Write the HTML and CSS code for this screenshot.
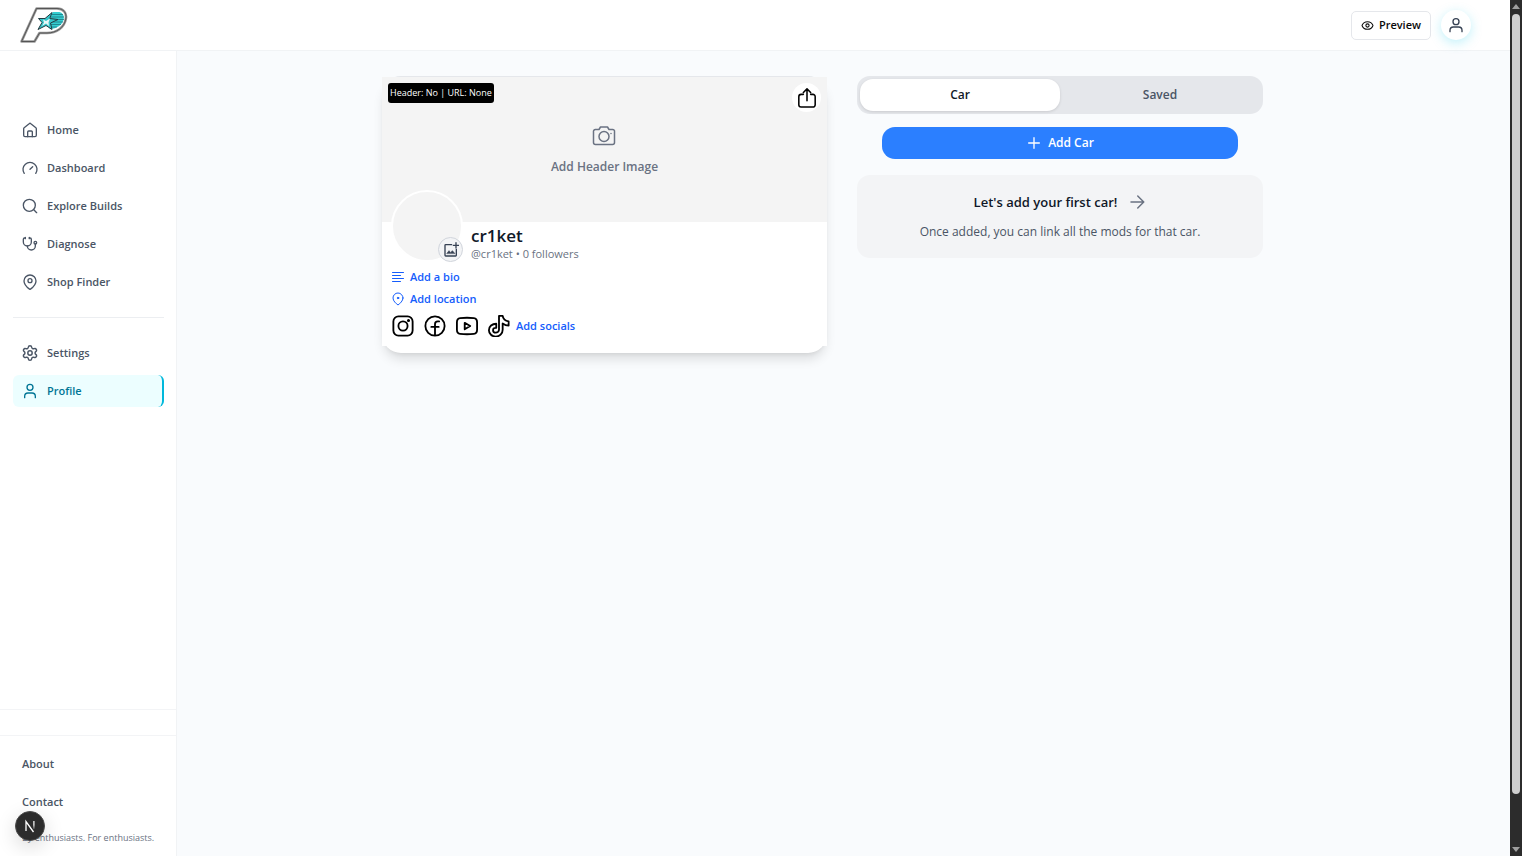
FILE: index.html
```html
<!DOCTYPE html>
<html lang="en">
<head>
    <meta charset="UTF-8">
    <meta name="viewport" content="width=device-width, initial-scale=1.0">
    <title>Profile</title>
    <link rel="stylesheet" href="styles.css">
</head>
<body>
    <div class="page">
        <header class="topbar">
            <a class="logo" href="#" aria-label="Home page">
                <svg width="48" height="36" viewBox="0 0 48 36">
                    <path d="M16.500 1.500H37C43.500 1.500 47 6 45.800 12 44.300 20.500 36.500 26 27 26H19.500L14.500 34.500H1.500Z" fill="#fff" stroke="#9a9a9a" stroke-width="2.600" stroke-linejoin="round"/>
                    <path d="M16.500 1.500H37C43.500 1.500 47 6 45.800 12 44.300 20.500 36.500 26 27 26H19.500L14.500 34.500H1.500Z" fill="none" stroke="#444" stroke-width=".8" stroke-linejoin="round"/>
                    <path d="M33 5H39.500C43 6 44.500 9 43.500 13 42 18 37 21.500 30 22.300L28 16 30 8Z" fill="#35cdd0"/>
                    <path d="M32 7.500h11M31 10h13M30 12.500h14M31 15h12M30 17.500h11M30 20h7" stroke="#176c75" stroke-width=".7"/>
                    <path d="M32 5.500 29.800 11.500 38 12.500 30.500 16 32 22.500 26 18.500 18 22.500 22 15.500 18.500 11.500H25Z" fill="#35c5ca" stroke="#263b42" stroke-width="1" stroke-linejoin="round"/>
                    <path d="M23 12.500 26 14 30 11.500 28.500 15.500 29 19 26 16.500 22 19 24 15.500Z" fill="#e9f7f7"/>
                </svg>
            </a>
            <div class="topbar-actions">
                <button class="preview-btn" type="button">
                    <svg class="icon" width="13" height="13" viewBox="0 0 24 24"><path d="M2.062 12.348a1 1 0 0 1 0-.696 10.750 10.750 0 0 1 19.876 0 1 1 0 0 1 0 .696 10.750 10.750 0 0 1-19.876 0"/><circle cx="12" cy="12" r="3"/></svg>
                    Preview
                </button>
                <button class="account-btn" type="button" aria-label="Account">
                    <svg class="icon" width="16" height="16" viewBox="0 0 24 24"><circle cx="12" cy="7" r="4.500"/><path d="M3 22v-2a5 5 0 0 1 5-5h8a5 5 0 0 1 5 5v2"/></svg>
                </button>
            </div>
        </header>

        <div class="layout">
            <aside class="sidebar">
                <nav class="nav">
                    <a class="nav-item" href="#">
                        <svg class="icon" width="16" height="16" viewBox="0 0 24 24"><path d="M15.500 22v-7a1.500 1.500 0 0 0-1.500-1.500h-4A1.500 1.500 0 0 0 8.500 15v7"/><path d="M2.500 10a2 2 0 0 1 .709-1.528l7.500-6a2 2 0 0 1 2.582 0l7.500 6A2 2 0 0 1 21.500 10v10a2 2 0 0 1-2 2h-15a2 2 0 0 1-2-2z"/></svg>
                        Home
                    </a>
                    <a class="nav-item" href="#">
                        <svg class="icon" width="16" height="16" viewBox="0 0 24 24"><path d="m12 14 4-4"/><path d="M3.340 20a10.500 10.500 0 1 1 17.320 0"/></svg>
                        Dashboard
                    </a>
                    <a class="nav-item" href="#">
                        <svg class="icon" width="16" height="16" viewBox="0 0 24 24"><circle cx="11" cy="11" r="9"/><path d="m22 22-4.300-4.300"/></svg>
                        Explore Builds
                    </a>
                    <a class="nav-item" href="#">
                        <svg class="icon" width="16" height="16" viewBox="0 0 24 24"><path d="M11 2v2M5 2v2"/><path d="M5 3H4a2 2 0 0 0-2 2v4a6 6 0 0 0 12 0V5a2 2 0 0 0-2-2h-1"/><path d="M8 15a6 6 0 0 0 12 0v-3"/><circle cx="20" cy="10" r="2"/></svg>
                        Diagnose
                    </a>
                    <a class="nav-item" href="#">
                        <svg class="icon" width="16" height="16" viewBox="0 0 24 24"><path d="M21 10.500c0 5-6 10.500-8.300 12.200a1 1 0 0 1-1.400 0C9 21 3 15.500 3 10.500a9 9 0 0 1 18 0"/><circle cx="12" cy="10" r="3"/></svg>
                        Shop Finder
                    </a>
                    <hr class="nav-divider">
                    <a class="nav-item" href="#">
                        <svg class="icon" width="16" height="16" viewBox="1 1 22 22"><path d="M9.670 4.140a2.340 2.340 0 0 1 4.660 0 2.340 2.340 0 0 0 3.320 1.910 2.340 2.340 0 0 1 2.330 4.030 2.340 2.340 0 0 0 0 3.840 2.340 2.340 0 0 1-2.330 4.030 2.340 2.340 0 0 0-3.320 1.910 2.340 2.340 0 0 1-4.660 0 2.340 2.340 0 0 0-3.320-1.910 2.340 2.340 0 0 1-2.330-4.030 2.340 2.340 0 0 0 0-3.840 2.340 2.340 0 0 1 2.330-4.030 2.340 2.340 0 0 0 3.320-1.910"/><circle cx="12" cy="12" r="3"/></svg>
                        Settings
                    </a>
                    <a class="nav-item active" href="#" aria-current="page">
                        <svg class="icon" width="16" height="16" viewBox="0 0 24 24"><circle cx="12" cy="6.500" r="4.500"/><path d="M4 22v-2a5 5 0 0 1 5-5h6a5 5 0 0 1 5 5v2"/></svg>
                        Profile
                    </a>
                </nav>
                <div class="sidebar-strip"></div>
                <footer class="sidebar-footer">
                    <a class="nav-item" href="#">About</a>
                    <a class="nav-item" href="#">Contact</a>
                    <p class="tagline">By enthusiasts. For enthusiasts.</p>
                </footer>
            </aside>

            <main class="content">
                <section class="profile-card">
                    <div class="cover">
                        <span class="debug-badge">Header: No | URL: None</span>
                        <button class="cover-btn" type="button">
                            <svg class="icon" width="24" height="24" viewBox="0 0 24 24"><path stroke-width="1.500" d="M7 5.500 8.500 3h7L17 5.500h3A2 2 0 0 1 22.500 8v10.500a2 2 0 0 1-2 2h-17a2 2 0 0 1-2-2V8a2 2 0 0 1 2-2.500Z"/><circle cx="12" cy="12.500" r="5" stroke-width="1.500"/><path stroke-width="1.500" d="M19 9.500h.01"/></svg>
                            Add Header Image
                        </button>
                        <button class="share-btn" type="button" aria-label="Share">
                            <svg class="icon" width="20" height="20" viewBox="1 1 22 22"><path stroke-width="1.700" d="M8 8H5.500A2.500 2.500 0 0 0 3 10.500v9A2.500 2.500 0 0 0 5.500 22h13a2.500 2.500 0 0 0 2.500-2.500v-9A2.500 2.500 0 0 0 18.500 8H16M12 15V2M8 6l4-4 4 4"/></svg>
                        </button>
                    </div>
                    <div class="profile-body">
                        <div class="identity">
                            <div class="avatar">
                                <button class="avatar-btn" type="button" aria-label="Add profile photo">
                                    <svg class="icon" width="16" height="16" viewBox="0 0 24 24"><path d="M13 4H4a1 1 0 0 0-1 1v15a1 1 0 0 0 1 1h15a1 1 0 0 0 1-1v-9M19.500 1v8M15.500 5h8"/><path fill="currentColor" stroke-width="1" d="m6 17 3-4 2.500 3L14 13l3.500 4Z"/></svg>
                                </button>
                            </div>
                            <div>
                                <h1 class="username">cr1ket</h1>
                                <p class="handle">@cr1ket • 0 followers</p>
                            </div>
                        </div>
                        <button class="link-btn" type="button">
                            <svg class="icon" width="12" height="12" viewBox="0 0 24 24"><path d="M1 3h22M1 9h16M1 15h22M1 21h16"/></svg>
                            Add a bio
                        </button>
                        <button class="link-btn" type="button">
                            <svg class="icon" width="12" height="14" viewBox="0 0 24 28"><path d="M22 12c0 6-6 11-10 14C8 23 2 18 2 12a10 10 0 0 1 20 0Z"/><circle cx="12" cy="12" r="1.500" fill="currentColor"/></svg>
                            Add location
                        </button>
                        <div class="socials">
                            <svg class="icon" width="22" height="22" viewBox="0 0 24 24"><rect x="1.500" y="1.500" width="21" height="21" rx="5.500"/><circle cx="12" cy="12" r="5"/><circle cx="18" cy="6" r=".7" fill="currentColor"/></svg>
                            <svg class="icon" width="22" height="22" viewBox="0 0 24 24"><circle cx="12" cy="12" r="10.500"/><path d="M16.500 7H15a3 3 0 0 0-3 3v12M8 13h8"/></svg>
                            <svg class="icon" width="22" height="22" viewBox="1 0 24 24"><path d="M5.500 3.500Q13 2.500 20.500 3.500C23 3.800 24 5 24 8v8c0 3-1 4.200-3.500 4.500Q13 21.500 5.500 20.500C3 20.200 2 19 2 16V8C2 5 3 3.800 5.500 3.500Z"/><path d="m10.500 8.500 6 3.500-6 3.500Z"/></svg>
                            <svg class="icon" width="22" height="22" viewBox="0 0 24 24"><path d="M12 1h4c.5 3.500 2.500 5.500 6.500 6v4.500c-2.500 0-4.500-.8-6.500-2.200V16c0 4.500-3.500 7.500-7.500 7.500S1 20.500 1 16.500 4.500 9.500 9 9.500V14c-2-.2-3.500.8-3.500 2.500S6.800 19.300 8.500 19.300 12 18 12 16Z"/></svg>
                            <button class="link-btn" type="button">Add socials</button>
                        </div>
                    </div>
                </section>

                <section class="garage">
                    <div class="tabs" role="tablist">
                        <button class="tab selected" type="button" role="tab" aria-selected="true">Car</button>
                        <button class="tab" type="button" role="tab" aria-selected="false">Saved</button>
                    </div>
                    <button class="add-car-btn" type="button">
                        <svg class="icon" width="16" height="16" viewBox="0 0 24 24"><path d="M4 12h16M12 4v16"/></svg>
                        Add Car
                    </button>
                    <div class="empty-state">
                        <h2 class="empty-title">
                            Let's add your first car!
                            <svg class="icon" width="18" height="18" viewBox="0 0 24 24"><path d="M4 12h16M13 4l8 8-8 8"/></svg>
                        </h2>
                        <p class="empty-text">Once added, you can link all the mods for that car.</p>
                    </div>
                </section>
            </main>
        </div>
    </div>

    <div class="scrollbar" aria-hidden="true">
        <span class="arrow-up"></span>
        <span class="thumb"></span>
        <span class="arrow-down"></span>
    </div>

    <button class="dev-btn" type="button" aria-label="Open dev tools">
        <svg width="14" height="14" viewBox="0 0 14 14" fill="none">
            <defs><linearGradient id="fade" x1="0" y1="0" x2="0" y2="1"><stop offset=".5" stop-color="#fff"/><stop offset="1" stop-color="#fff" stop-opacity=".2"/></linearGradient></defs>
            <path d="M3 12V2.500L10.500 13" stroke="#fff" stroke-width="1.300"/>
            <path d="M10.300 2h1.200v8h-1.200z" fill="url(#fade)"/>
        </svg>
    </button>
</body>
</html>
```

FILE: styles.css
```css
* { box-sizing: border-box; margin: 0; padding: 0; }
body {
    font-family: 'Open Sans', 'Noto Sans', sans-serif;
    font-size: 11px;
    line-height: 16px;
    background-color: #f9fafb;
    color: #101828;
    display: flex;
    height: 100vh;
    overflow: hidden;
}
button { font: inherit; color: inherit; border: none; background: none; cursor: pointer; }
a { color: inherit; text-decoration: none; }
svg { flex-shrink: 0; display: block; }
.icon {
    fill: none;
    stroke: currentColor;
    stroke-width: 2;
    stroke-linecap: round;
    stroke-linejoin: round;
}
.page { flex: 1; min-width: 0; display: flex; flex-direction: column; background-color: #f9fbfd; }

/* Top bar */
.topbar {
    height: 51px;
    display: flex;
    align-items: center;
    justify-content: space-between;
    padding: 0 39px 0 20px;
    background-color: #fff;
    border-bottom: 1px solid #f1f3f5;
}
.topbar-actions { display: flex; align-items: center; gap: 10px; }
.preview-btn {
    display: flex;
    align-items: center;
    gap: 5px;
    height: 29px;
    padding: 0 9px;
    border: 1px solid #e5e7eb;
    border-radius: 5px;
    font-weight: 600;
    color: #0a0a0a;
}
.account-btn {
    width: 30px;
    height: 30px;
    display: flex;
    align-items: center;
    justify-content: center;
    border-radius: 50%;
    background-color: #fff;
    color: #364153;
    box-shadow: 0 3px 12px rgba(0, 200, 235, 0.25);
}

/* Sidebar */
.layout { flex: 1; min-height: 0; display: flex; }
.sidebar {
    width: 177px;
    flex-shrink: 0;
    display: flex;
    flex-direction: column;
    background-color: #fff;
    border-right: 1px solid #f1f3f5;
}
.nav {
    flex: 1;
    display: flex;
    flex-direction: column;
    gap: 6px;
    padding: 63px 12px 0 13px;
}
.nav-item {
    display: flex;
    align-items: center;
    gap: 9px;
    height: 32px;
    padding: 0 9px;
    border-radius: 6px;
    font-weight: 600;
    color: #4a5565;
}
.nav-item.active {
    background-color: #ecfeff;
    color: #007595;
    border-right: 2px solid #00b8db;
}
.nav-divider { border: none; border-top: 1px solid #eceef1; margin: 13px 0; }
.sidebar-strip { height: 27px; border-top: 1px solid #f3f4f6; border-bottom: 1px solid #f3f4f6; }
.sidebar-footer {
    display: flex;
    flex-direction: column;
    gap: 6px;
    padding: 12px 13px 10px;
}
.tagline { padding: 6px 9px 0; font-size: 9px; line-height: 16px; color: #6a7282; white-space: nowrap; }

/* Content */
.content {
    flex: 1;
    display: flex;
    align-items: flex-start;
    justify-content: center;
    gap: 30px;
    padding: 25px 48px 25px 6px;
}
.profile-card {
    flex: 0 1 445px;
    padding-bottom: 7px;
    border-top: 1px solid #e5e7eb;
    border-radius: 19px;
    background-color: #fff;
    box-shadow: 0 8px 12px -2px rgba(0, 0, 0, 0.12), 0 3px 5px -3px rgba(0, 0, 0, 0.1);
}
.cover {
    position: relative;
    height: 145px;
    display: flex;
    align-items: center;
    justify-content: center;
    background-color: #f4f4f4;
}
.cover-btn {
    display: flex;
    flex-direction: column;
    align-items: center;
    gap: 10px;
    font-size: 12px;
    line-height: 18px;
    font-weight: 600;
    color: #6a7282;
}
.debug-badge {
    position: absolute;
    top: 6px;
    left: 6px;
    padding: 2px;
    border-radius: 3px;
    background-color: #000;
    color: #fff;
    font-size: 9px;
    line-height: 16px;
}
.share-btn {
    position: absolute;
    top: 6px;
    right: 6px;
    width: 29px;
    height: 29px;
    display: flex;
    align-items: center;
    justify-content: center;
    border-radius: 50%;
    background-color: #fff;
    color: #000;
}
.profile-body {
    display: flex;
    flex-direction: column;
    align-items: flex-start;
    gap: 6px;
    padding: 0 9px 7px;
    background-color: #fff;
}
.identity { display: flex; align-items: flex-end; gap: 8px; margin: -32px 0 1px; }
.avatar {
    position: relative;
    width: 72px;
    height: 72px;
    border: 2px solid #fff;
    border-radius: 50%;
    background-color: #f4f4f4;
}
.avatar-btn {
    position: absolute;
    right: -2px;
    bottom: -2px;
    width: 25px;
    height: 25px;
    display: flex;
    align-items: center;
    justify-content: center;
    border: 1px solid #d1d5dc;
    border-radius: 50%;
    background-color: #f3f4f6;
    color: #364153;
}
.username { font-size: 17px; line-height: 20px; font-weight: 600; }
.handle { font-size: 11px; line-height: 16px; color: #6a7282; }
.link-btn {
    display: flex;
    align-items: center;
    gap: 6px;
    font-weight: 600;
    color: #155dfc;
}
.profile-body > .link-btn { padding-left: 1px; }
.socials { display: flex; align-items: center; gap: 10px; padding: 2px 1px; color: #000; }
.socials .link-btn { margin-left: -4px; }

/* Garage */
.garage { flex: 0 1 406px; display: flex; flex-direction: column; }
.tabs {
    display: flex;
    padding: 3px;
    border-radius: 13px;
    background-color: #e5e7eb;
}
.tab {
    flex: 1;
    height: 32px;
    border-radius: 13px;
    font-size: 12px;
    font-weight: 600;
    color: #4a5565;
}
.tab.selected {
    background-color: #fff;
    color: #101828;
    box-shadow: 0 1px 3px rgba(0, 0, 0, 0.12);
}
.add-car-btn {
    display: flex;
    align-items: center;
    justify-content: center;
    gap: 6px;
    height: 32px;
    margin: 13px 25px 16px;
    border-radius: 13px;
    background-color: #2b7fff;
    color: #fff;
    font-size: 12px;
    font-weight: 600;
}
.empty-state {
    padding: 16px;
    border-radius: 13px;
    background-color: #f3f4f6;
    text-align: center;
}
.empty-title {
    display: flex;
    align-items: center;
    justify-content: center;
    gap: 11px;
    font-size: 13px;
    line-height: 22px;
    font-weight: 600;
}
.empty-title .icon { color: #6a7282; }
.empty-text { margin-top: 9px; font-size: 12px; line-height: 20px; color: #4a5565; }

/* Scroll track */
.scrollbar {
    width: 12px;
    display: flex;
    flex-direction: column;
    align-items: center;
    padding: 4px 0;
    background-color: #2c2c2c;
}
.arrow-up, .arrow-down { border: 4px solid transparent; }
.arrow-up { border-top: none; border-bottom: 5px solid #9f9f9f; }
.arrow-down { border-bottom: none; border-top: 5px solid #9f9f9f; }
.thumb { width: 8px; height: 92%; margin: 5px 0 auto; border-radius: 4px; background-color: #cfcfcf; }

.dev-btn {
    position: fixed;
    left: 15px;
    bottom: 15px;
    width: 30px;
    height: 30px;
    display: flex;
    align-items: center;
    justify-content: center;
    border: 1px solid #4a4a4a;
    border-radius: 50%;
    background-color: #2c2c2c;
    box-shadow: 0 6px 20px rgba(0, 0, 0, 0.15);
}
```
